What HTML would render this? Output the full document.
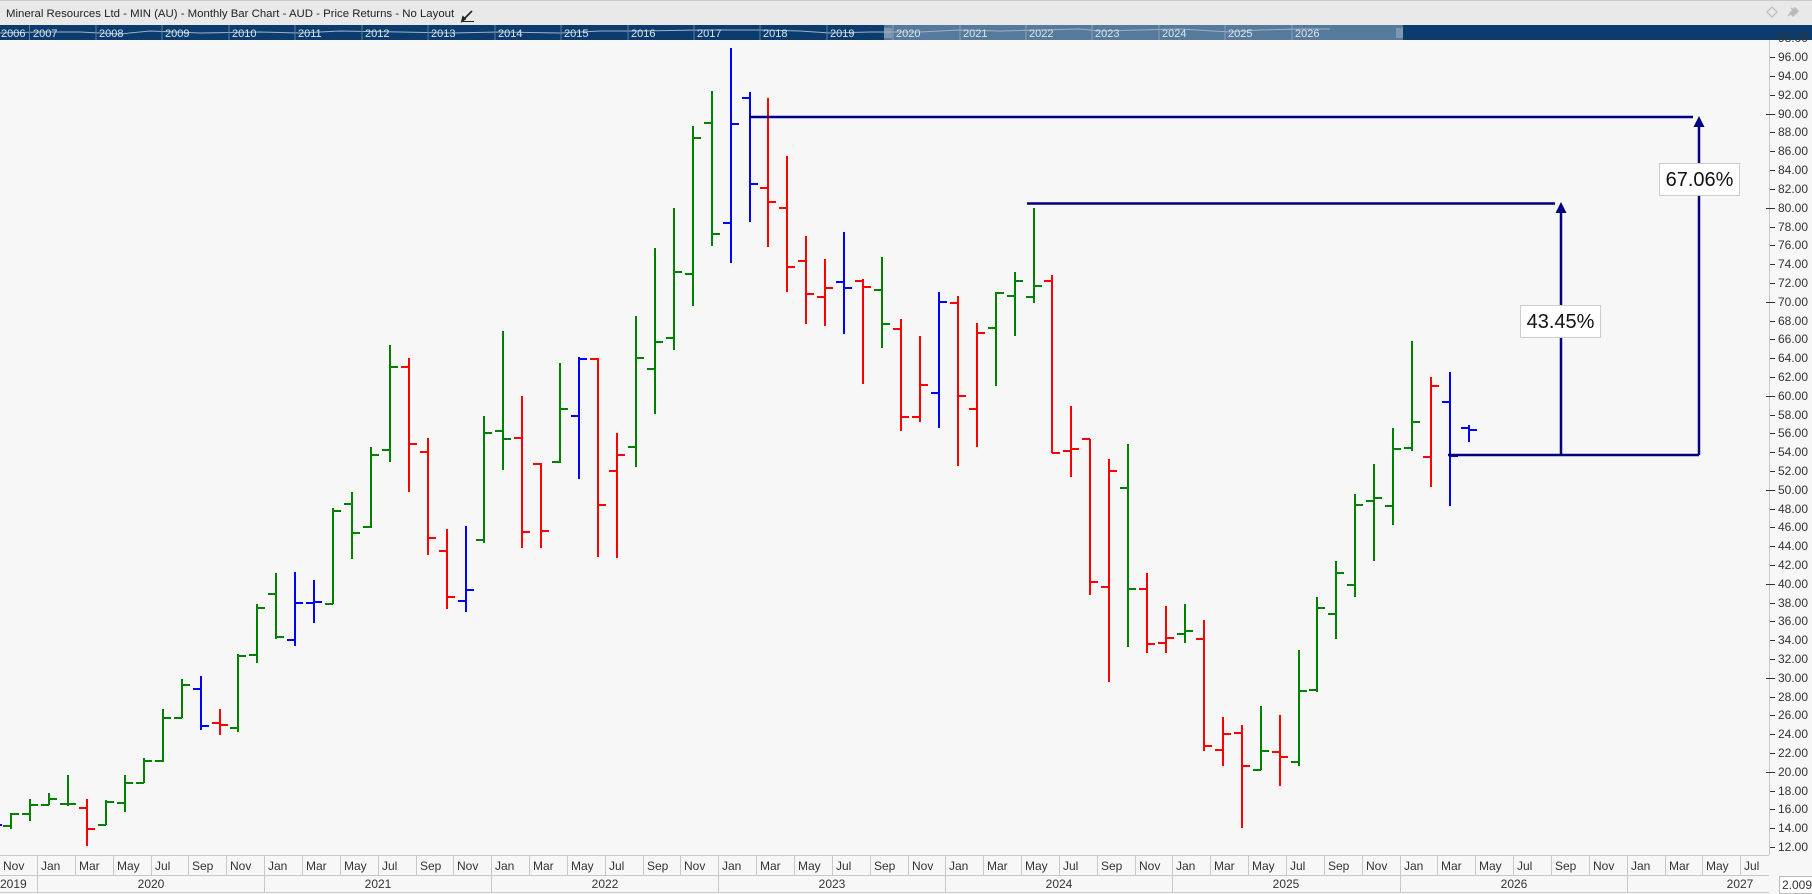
<!DOCTYPE html>
<html><head><meta charset="utf-8"><style>
html,body{margin:0;padding:0;background:#f7f7f7;}
svg{display:block;font-family:"Liberation Sans",sans-serif;}
</style></head><body>
<svg width="1812" height="894" viewBox="0 0 1812 894" xmlns="http://www.w3.org/2000/svg">
<rect x="0" y="0" width="1812" height="894" fill="#f7f7f7"/>
<rect x="0" y="0" width="1812" height="25" fill="#e9e9e9"/>
<line x1="0" y1="0.5" x2="1812" y2="0.5" stroke="#c8c8c8"/>
<text x="6" y="17" font-size="11.4" fill="#222">Mineral Resources Ltd - MIN (AU) - Monthly Bar Chart - AUD - Price Returns - No Layout</text>
<g stroke="#222" stroke-width="1.6" fill="none"><path d="M464 19 L472 11"/><path d="M462 21 L463 17 L465 19 Z" fill="#222"/><line x1="461" y1="21.5" x2="474" y2="21.5" stroke-width="1"/></g>
<path d="M1772 7 L1777 12 L1772 17 L1767 12 Z" fill="none" stroke="#bbb" stroke-width="1.2"/>
<path d="M1788 16 L1792 12 M1791 8 L1797 14 M1790 13 L1795 8 L1798 11 L1793 16 Z" stroke="#bbb" stroke-width="1.5" fill="#bbb"/>
<rect x="0" y="25" width="1812" height="15" fill="#0b3c6d"/>
<rect x="884" y="25" width="519" height="15" fill="#567a9c"/>
<rect x="884" y="28" width="8" height="10" fill="#8096ad"/>
<rect x="1396" y="28" width="7" height="10" fill="#8096ad"/>
<polyline points="0,33 40,32 80,32 120,34 150,31 200,33 260,32 300,33 340,31 400,32 450,33 500,32 560,33 600,31 640,31 700,30 760,30 800,31 830,33 870,32 920,32 960,30 1000,31 1040,30 1080,29 1100,31 1140,30 1180,29 1230,32 1260,30 1300,29 1330,29" fill="none" stroke="#9fb2c6" stroke-width="1"/>
<g stroke="#5b7ea3" stroke-width="1">
<line x1="29.5" y1="25" x2="29.5" y2="40"/><line x1="96" y1="25" x2="96" y2="40"/><line x1="162" y1="25" x2="162" y2="40"/><line x1="229" y1="25" x2="229" y2="40"/><line x1="295" y1="25" x2="295" y2="40"/><line x1="362" y1="25" x2="362" y2="40"/><line x1="428" y1="25" x2="428" y2="40"/><line x1="495" y1="25" x2="495" y2="40"/><line x1="561" y1="25" x2="561" y2="40"/><line x1="628" y1="25" x2="628" y2="40"/><line x1="694" y1="25" x2="694" y2="40"/><line x1="760" y1="25" x2="760" y2="40"/><line x1="827" y1="25" x2="827" y2="40"/></g>
<g stroke="#8aa2bd" stroke-width="1"><line x1="893" y1="25" x2="893" y2="40"/><line x1="960" y1="25" x2="960" y2="40"/><line x1="1026" y1="25" x2="1026" y2="40"/><line x1="1092" y1="25" x2="1092" y2="40"/><line x1="1159" y1="25" x2="1159" y2="40"/><line x1="1225" y1="25" x2="1225" y2="40"/><line x1="1292" y1="25" x2="1292" y2="40"/></g>
<g font-size="11" fill="#dde5ee">
<text x="1" y="37">2006</text><text x="33" y="37">2007</text><text x="99" y="37">2008</text><text x="165" y="37">2009</text><text x="232" y="37">2010</text><text x="298" y="37">2011</text><text x="365" y="37">2012</text><text x="431" y="37">2013</text><text x="498" y="37">2014</text><text x="564" y="37">2015</text><text x="631" y="37">2016</text><text x="697" y="37">2017</text><text x="763" y="37">2018</text><text x="830" y="37">2019</text><text x="896" y="37">2020</text><text x="963" y="37">2021</text><text x="1029" y="37">2022</text><text x="1095" y="37">2023</text><text x="1162" y="37">2024</text><text x="1228" y="37">2025</text><text x="1295" y="37">2026</text></g>
<line x1="1769.5" y1="40" x2="1769.5" y2="855" stroke="#c8c8c8"/>
<g font-size="12" fill="#333">
<text x="1778" y="42">98.00</text><text x="1778" y="61">96.00</text><text x="1778" y="80">94.00</text><text x="1778" y="99">92.00</text><text x="1778" y="118">90.00</text><text x="1778" y="136">88.00</text><text x="1778" y="155">86.00</text><text x="1778" y="174">84.00</text><text x="1778" y="193">82.00</text><text x="1778" y="212">80.00</text><text x="1778" y="231">78.00</text><text x="1778" y="249">76.00</text><text x="1778" y="268">74.00</text><text x="1778" y="287">72.00</text><text x="1778" y="306">70.00</text><text x="1778" y="325">68.00</text><text x="1778" y="343">66.00</text><text x="1778" y="362">64.00</text><text x="1778" y="381">62.00</text><text x="1778" y="400">60.00</text><text x="1778" y="419">58.00</text><text x="1778" y="437">56.00</text><text x="1778" y="456">54.00</text><text x="1778" y="475">52.00</text><text x="1778" y="494">50.00</text><text x="1778" y="513">48.00</text><text x="1778" y="531">46.00</text><text x="1778" y="550">44.00</text><text x="1778" y="569">42.00</text><text x="1778" y="588">40.00</text><text x="1778" y="607">38.00</text><text x="1778" y="625">36.00</text><text x="1778" y="644">34.00</text><text x="1778" y="663">32.00</text><text x="1778" y="682">30.00</text><text x="1778" y="701">28.00</text><text x="1778" y="719">26.00</text><text x="1778" y="738">24.00</text><text x="1778" y="757">22.00</text><text x="1778" y="776">20.00</text><text x="1778" y="795">18.00</text><text x="1778" y="813">16.00</text><text x="1778" y="832">14.00</text><text x="1778" y="851">12.00</text></g>
<path stroke="#333" stroke-width="1" d="M1770 57.5H1775M1770 76.5H1775M1770 95.5H1775M1766 114.5H1775M1770 132.5H1775M1770 151.5H1775M1770 170.5H1775M1770 189.5H1775M1766 208.5H1775M1770 227.5H1775M1770 245.5H1775M1770 264.5H1775M1770 283.5H1775M1766 302.5H1775M1770 321.5H1775M1770 339.5H1775M1770 358.5H1775M1770 377.5H1775M1766 396.5H1775M1770 415.5H1775M1770 433.5H1775M1770 452.5H1775M1770 471.5H1775M1766 490.5H1775M1770 509.5H1775M1770 527.5H1775M1770 546.5H1775M1770 565.5H1775M1766 584.5H1775M1770 603.5H1775M1770 621.5H1775M1770 640.5H1775M1770 659.5H1775M1766 678.5H1775M1770 697.5H1775M1770 715.5H1775M1770 734.5H1775M1770 753.5H1775M1766 772.5H1775M1770 791.5H1775M1770 809.5H1775M1770 828.5H1775M1770 847.5H1775"/>
<g fill="none" stroke-width="2" shape-rendering="crispEdges">
<path stroke="#008000" d="M11 813V829M3 826H11M11 814H19 M30 799V821M22 814H30M30 805H38 M49 793V805M41 805H49M49 799H57 M68 775V806M60 804H68M68 804H76 M106 800V825M98 825H106M106 802H114 M125 775V812M117 803H125M125 783H133 M144 758V783M136 783H144M144 761H152 M163 709V762M155 761H163M163 718H171 M182 679V718M174 718H182M182 685H190 M238 654V732M230 728H238M238 656H246 M257 604V663M249 655H257M257 608H265 M276 573V639M268 594H276M276 637H284 M333 508V604M325 604H333M333 511H341 M352 492V559M344 504H352M352 533H360 M371 447V528M363 527H371M371 455H379 M390 345V462M382 450H390M390 367H398 M484 416V543M476 540H484M484 433H492 M503 331V470M495 431H503M503 439H511 M560 363V463M552 462H560M560 409H568 M636 316V467M628 447H636M636 358H644 M655 248V414M647 369H655M655 342H663 M674 208V350M666 338H674M674 272H682 M693 126V306M685 274H693M693 138H701 M712 91V246M704 123H712M712 234H720 M882 257V348M874 290H882M882 324H890 M996 292V386M988 328H996M996 293H1004 M1015 272V336M1007 296H1015M1015 281H1023 M1034 208V303M1026 297H1034M1034 286H1042 M1128 444V647M1120 488H1128M1128 589H1136 M1185 604V643M1177 634H1185M1185 631H1193 M1261 706V770M1253 770H1261M1261 751H1269 M1299 650V766M1291 762H1299M1299 691H1307 M1317 597V692M1309 690H1317M1317 608H1325 M1336 561V639M1328 614H1336M1336 573H1344 M1355 494V597M1347 585H1355M1355 505H1363 M1374 464V561M1366 501H1374M1374 498H1382 M1393 428V525M1385 506H1393M1393 449H1401 M1412 341V451M1404 448H1412M1412 422H1420"/>
<path stroke="#ff0000" d="M87 799V846M79 808H87M87 829H95 M220 709V735M212 723H220M220 725H228 M409 358V492M401 367H409M409 444H417 M428 438V555M420 452H428M428 538H436 M447 529V609M439 551H447M447 597H455 M522 396V548M514 438H522M522 532H530 M541 463V548M533 464H541M541 531H549 M598 358V557M590 359H598M598 505H606 M617 433V558M609 471H617M617 455H625 M768 98V247M760 188H768M768 202H776 M787 156V292M779 208H787M787 267H795 M806 236V324M798 261H806M806 294H814 M825 259V326M817 297H825M825 288H833 M863 279V384M855 281H863M863 287H871 M901 319V431M893 329H901M901 417H909 M920 336V422M912 417H920M920 385H928 M958 296V466M950 303H958M958 396H966 M977 323V447M969 409H977M977 333H985 M1052 275V453M1044 281H1052M1052 453H1060 M1071 406V477M1063 451H1071M1071 449H1079 M1090 439V595M1082 439H1090M1090 582H1098 M1109 459V682M1101 587H1109M1109 471H1117 M1147 573V653M1139 589H1147M1147 644H1155 M1166 606V653M1158 643H1166M1166 638H1174 M1204 620V751M1196 639H1204M1204 746H1212 M1223 717V766M1215 750H1223M1223 734H1231 M1242 725V828M1234 733H1242M1242 766H1250 M1280 715V786M1272 752H1280M1280 757H1288 M1431 377V487M1423 457H1431M1431 386H1439"/>
<path stroke="#0000ff" d="M0 825H2 M201 676V730M193 689H201M201 726H209 M295 572V646M287 640H295M295 603H303 M314 580V623M306 603H314M314 602H322 M466 526V612M458 601H466M466 590H474 M579 357V479M571 416H579M579 359H587 M731 48V263M723 223H731M731 124H739 M750 92V222M742 98H750M750 184H758 M844 232V334M836 282H844M844 288H852 M939 292V428M931 393H939M939 302H947 M1450 372V506M1442 402H1450M1450 456H1458 M1469 425V442M1461 428H1469M1469 430H1477"/>
</g>
<g stroke="#000080" stroke-width="2.5" fill="none">
<path d="M749 117H1693"/>
<path d="M1699 455V125"/>
<path d="M1027 203.5H1555"/>
<path d="M1561 455V211"/>
<path d="M1448 455H1699"/>
</g>
<polygon points="1693.5,127 1704.5,127 1699,116" fill="#000080"/>
<polygon points="1555.5,213 1566.5,213 1561,202" fill="#000080"/>
<rect x="1520.5" y="305.5" width="80" height="32" fill="#fff" stroke="#ccc"/>
<text x="1560.5" y="328" font-size="20" text-anchor="middle" fill="#111">43.45%</text>
<rect x="1659.5" y="163.5" width="80" height="32" fill="#fff" stroke="#ccc"/>
<text x="1699.5" y="186" font-size="20" text-anchor="middle" fill="#111">67.06%</text>
<rect x="0" y="855" width="1812" height="39" fill="#f7f7f7"/>
<line x1="0" y1="855.5" x2="1769" y2="855.5" stroke="#c8c8c8"/>
<line x1="0" y1="875.5" x2="1769" y2="875.5" stroke="#c8c8c8"/>
<line x1="0" y1="892.5" x2="1769" y2="892.5" stroke="#c8c8c8"/>
<g stroke="#c8c8c8" stroke-width="1">
<path d="M37.5 855V875M75.5 855V875M113.5 855V875M151.5 855V875M188.5 855V875M226.5 855V875M264.5 855V875M302.5 855V875M340.5 855V875M378.5 855V875M416.5 855V875M453.5 855V875M491.5 855V875M529.5 855V875M567.5 855V875M605.5 855V875M643.5 855V875M680.5 855V875M718.5 855V875M756.5 855V875M794.5 855V875M832.5 855V875M870.5 855V875M908.5 855V875M945.5 855V875M983.5 855V875M1021.5 855V875M1059.5 855V875M1097.5 855V875M1135.5 855V875M1172.5 855V875M1210.5 855V875M1248.5 855V875M1286.5 855V875M1324.5 855V875M1362.5 855V875M1400.5 855V875M1437.5 855V875M1475.5 855V875M1513.5 855V875M1551.5 855V875M1589.5 855V875M1627.5 855V875M1665.5 855V875M1702.5 855V875M1740.5 855V875"/>
<path d="M37.5 875V892M264.5 875V892M491.5 875V892M718.5 875V892M945.5 875V892M1172.5 875V892M1400.5 875V892M1627.5 875V892"/></g>
<g font-size="12" fill="#333">
<text x="3" y="870">Nov</text><text x="41" y="870">Jan</text><text x="79" y="870">Mar</text><text x="117" y="870">May</text><text x="155" y="870">Jul</text><text x="192" y="870">Sep</text><text x="230" y="870">Nov</text><text x="268" y="870">Jan</text><text x="306" y="870">Mar</text><text x="344" y="870">May</text><text x="382" y="870">Jul</text><text x="420" y="870">Sep</text><text x="457" y="870">Nov</text><text x="495" y="870">Jan</text><text x="533" y="870">Mar</text><text x="571" y="870">May</text><text x="609" y="870">Jul</text><text x="647" y="870">Sep</text><text x="684" y="870">Nov</text><text x="722" y="870">Jan</text><text x="760" y="870">Mar</text><text x="798" y="870">May</text><text x="836" y="870">Jul</text><text x="874" y="870">Sep</text><text x="912" y="870">Nov</text><text x="949" y="870">Jan</text><text x="987" y="870">Mar</text><text x="1025" y="870">May</text><text x="1063" y="870">Jul</text><text x="1101" y="870">Sep</text><text x="1139" y="870">Nov</text><text x="1176" y="870">Jan</text><text x="1214" y="870">Mar</text><text x="1252" y="870">May</text><text x="1290" y="870">Jul</text><text x="1328" y="870">Sep</text><text x="1366" y="870">Nov</text><text x="1404" y="870">Jan</text><text x="1441" y="870">Mar</text><text x="1479" y="870">May</text><text x="1517" y="870">Jul</text><text x="1555" y="870">Sep</text><text x="1593" y="870">Nov</text><text x="1631" y="870">Jan</text><text x="1669" y="870">Mar</text><text x="1706" y="870">May</text><text x="1744" y="870">Jul</text>
<text x="0" y="888">2019</text>
<text x="151" y="888" text-anchor="middle">2020</text><text x="378" y="888" text-anchor="middle">2021</text><text x="605" y="888" text-anchor="middle">2022</text><text x="832" y="888" text-anchor="middle">2023</text><text x="1059" y="888" text-anchor="middle">2024</text><text x="1286" y="888" text-anchor="middle">2025</text><text x="1514" y="888" text-anchor="middle">2026</text><text x="1740" y="888" text-anchor="middle">2027</text>
</g>
<rect x="1779.5" y="876.5" width="40" height="17" fill="#fff" stroke="#bbb"/>
<text x="1782" y="889" font-size="12" fill="#333">2.0091</text>
</svg>
</body></html>
